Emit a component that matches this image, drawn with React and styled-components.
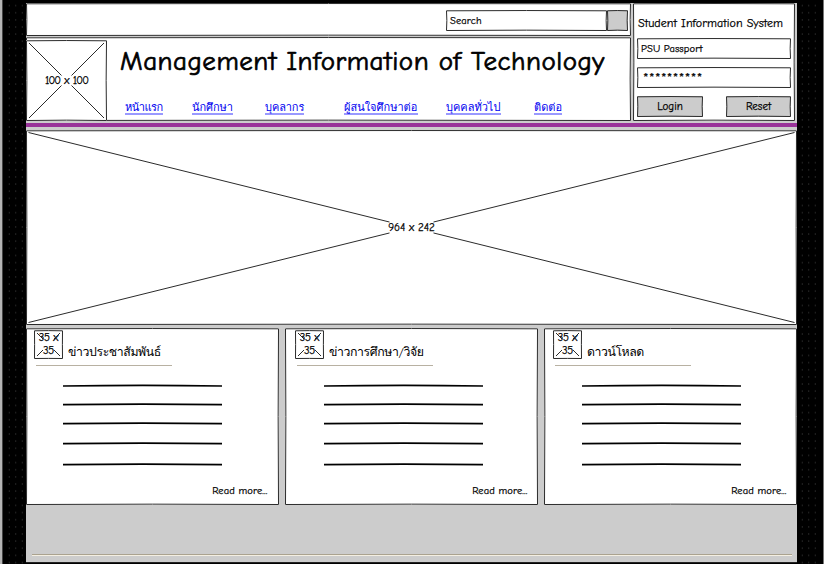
import React from "react";
import styled, { createGlobalStyle } from "styled-components";

const INK = "#2b2b2b";
const GRAY = "#cccccc";

const GlobalStyle = createGlobalStyle`
  *, *::before, *::after { box-sizing: border-box; }
  html, body { margin: 0; background: #000; overflow: hidden; }
  body {
    font-family: "Comic Sans MS", "Comic Neue", Lato, Loma, Garuda, Waree, "Noto Sans Thai Looped", "Noto Sans Thai", sans-serif;
    color: #000;
    -webkit-text-stroke: 0.25px currentColor;
  }
`;

const Page = styled.div`
  display: grid;
  grid-template-columns: 26px 771px 27px;
  width: 824px;
  height: 564px;
  overflow: hidden;
  background: #000;
`;

const Gutter = styled.div`
  display: flex;
  background: #000;
  border-left: ${(p) => (p.$side === "left" ? "2px solid #b4b4b4" : "0")};
  border-right: ${(p) => (p.$side === "right" ? "1px solid #777" : "0")};
  padding-left: ${(p) => (p.$side === "left" ? "4px" : "2px")};
  box-shadow: ${(p) => (p.$side === "left" ? "inset 1px 0 #444" : "none")};
`;

const Dots = styled.div`
  width: 20px;
  background: radial-gradient(circle, #292929 0.5px, transparent 1px) 0 2px / 6.5px 7.15px;
`;

const Main = styled.main`
  display: flex;
  flex-direction: column;
  margin-top: 3px;
  height: 560px;
  background: ${GRAY};
  border-bottom: 1px solid #222;
`;

const Masthead = styled.header`
  display: flex;
  gap: 2px;
  height: 119px;
`;

const MastheadLeft = styled.div`
  display: flex;
  flex-direction: column;
  gap: 1px;
  width: 605px;
`;

const Sketch = styled.div`
  position: relative;
  flex: none;
  width: ${(p) => p.$w}px;
  height: ${(p) => p.$h}px;
  background: ${(p) => p.$fill || "#fff"};
`;

const Outline = styled.svg`
  position: absolute;
  inset: 0;
  pointer-events: none;
`;

function Panel({ w, h, fill, cross, gap = 0, inset = 3, bow = 0.7, children }) {
  const r = w - 0.5;
  const b = h - 0.5;
  const gx = gap;
  const gy = (gap * (h - 2 * inset)) / (w - 2 * inset);
  const cx = w / 2;
  const cy = h / 2;
  return (
    <Sketch $w={w} $h={h} $fill={fill}>
      <Outline width={w} height={h} fill="none" stroke={INK}>
        <path
          d={`M.5 .8Q${cx} ${0.5 - bow * 0.3} ${r} .8Q${r - bow} ${cy} ${r} ${b}Q${cx} ${b - bow} .5 ${b}Q${0.5 + bow} ${cy} .5 .8Z`}
        />
        {cross && (
          <path
            d={`M${inset} ${inset}L${cx - gx} ${cy - gy}M${w - inset} ${inset}L${cx + gx} ${cy - gy}M${inset} ${h - inset}L${cx - gx} ${cy + gy}M${w - inset} ${h - inset}L${cx + gx} ${cy + gy}`}
          />
        )}
      </Outline>
      {children}
    </Sketch>
  );
}

const Centered = styled.div`
  display: flex;
  height: 100%;
  align-items: center;
  justify-content: center;
  white-space: nowrap;
  font-size: 11px;
  letter-spacing: ${(p) => p.$track || 0}px;
  word-spacing: ${(p) => p.$word || 0}px;
`;

const SearchRow = styled.div`
  display: flex;
  justify-content: flex-end;
  padding: 7px 3px 0 0;
`;

const FieldText = styled.div`
  padding-left: 4px;
  line-height: 22px;
  font-size: 10.5px;
  white-space: nowrap;
  letter-spacing: 0.1px;
`;

const Password = styled(FieldText)`
  padding-left: 6px;
  line-height: 23px;
  font-size: 14px;
  letter-spacing: 0.45px;
`;

const Brand = styled.div`
  display: flex;
  padding-top: 3px;
`;

const BrandText = styled.div`
  flex: 1;
  padding-left: 13px;
`;

const Title = styled.h1`
  margin: 2px 0 0;
  font-size: 27px;
  line-height: 40px;
  height: 38px;
  font-weight: 400;
  letter-spacing: 0.52px;
  white-space: nowrap;
  -webkit-text-stroke: 0.7px #000;
`;

const Nav = styled.nav`
  display: grid;
  grid-template-columns: 67px 73px 79px 102px 88px 40px;
  padding: 20px 0 0 5px;
`;

const NavItem = styled.a`
  justify-self: start;
  width: ${(p) => p.$w}px;
  height: 15px;
  line-height: 15px;
  font-size: 11px;
  color: #0000f0;
  white-space: nowrap;
  border-bottom: 2px solid #9999ff;
  letter-spacing: ${(p) => p.$track}px;
  -webkit-text-stroke: 0;
`;

const Login = styled.form`
  display: flex;
  flex-direction: column;
  padding: 13px 0 0 4px;
`;

const LoginTitle = styled.div`
  height: 22px;
  padding-left: 1px;
  line-height: 14px;
  font-size: 12px;
  letter-spacing: 0.06px;
  white-space: nowrap;
`;

const Stack = styled.div`
  display: flex;
  flex-direction: column;
  gap: 8px;
`;

const Buttons = styled.div`
  display: flex;
  justify-content: space-between;
  width: 154px;
`;

const Stripe = styled.div`
  height: 4px;
  margin: 1px 0 3px;
  background: #993399;
`;

const Cards = styled.section`
  display: flex;
  justify-content: space-between;
  margin-top: 3px;
`;

const CardHead = styled.div`
  display: flex;
  gap: 5px;
  padding: 2px 0 0 ${(p) => p.$left}px;
`;

const Thumb = styled.div`
  padding-top: 1px;
  text-align: center;
  font-size: 11px;
  line-height: 13px;
  letter-spacing: -0.2px;
`;

const CardTitle = styled.h2`
  height: 18px;
  margin: 13px 0 0;
  font-size: 12.3px;
  line-height: 18px;
  font-weight: 400;
  white-space: nowrap;
  letter-spacing: ${(p) => p.$track}px;
  -webkit-text-stroke: 0;
`;

const CardRule = styled.div`
  width: 136px;
  height: 1px;
  margin: 4px 0 0 ${(p) => p.$left}px;
  background: #b8b1a2;
`;

const Lines = styled.svg`
  display: block;
  margin: 14px 0 0 ${(p) => p.$left}px;
`;

const ReadMore = styled.a`
  display: block;
  margin-top: 12px;
  padding-right: ${(p) => p.$right}px;
  text-align: right;
  font-size: 10.5px;
  line-height: 18px;
  letter-spacing: 0.1px;
`;

const FooterRule = styled.footer`
  width: 760px;
  height: 2px;
  margin: 49px 0 0 6px;
  border-top: 1px solid #aaa28f;
  background: #f4efe2;
`;

const links = [
  ["หน้าแรก", 38, -0.5],
  ["นักศึกษา", 41, -0.05],
  ["บุคลากร", 39, -0.1],
  ["ผู้สนใจศึกษาต่อ", 74, 0],
  ["บุคคลทั่วไป", 55, 0],
  ["ติดต่อ", 28, 0],
];

const cards = [
  { title: "ข่าวประชาสัมพันธ์", left: 8, right: 11.5, track: -0.4 },
  { title: "ข่าวการศึกษา/วิจัย", left: 10, right: 10.5, track: -0.4 },
  { title: "ดาวน์โหลด", left: 9, right: 10.5, track: -0.45 },
];

function Card({ title, left, right, track }) {
  return (
    <Panel w={253} h={177}>
      <CardHead $left={left}>
        <Panel w={29} h={29} cross gap={5.5} bow={0.2}>
          <Thumb>35 x<br />35</Thumb>
        </Panel>
        <CardTitle $track={track}>{title}</CardTitle>
      </CardHead>
      <CardRule $left={left + 2} />
      <Lines width="159" height="90" $left={left + 29} fill="none" stroke="#000" strokeWidth="1.7">
        {[6, 24.7, 43.7, 63.7, 84.7].map((y) => (
          <path key={y} d={`M0 ${y}Q80 ${y - 1.3} 159 ${y}`} />
        ))}
      </Lines>
      <ReadMore $right={right}>Read more...</ReadMore>
    </Panel>
  );
}

export default function App() {
  return (
    <>
      <GlobalStyle />
      <Page>
        <Gutter $side="left"><Dots /></Gutter>
        <Main>
          <Masthead>
            <MastheadLeft>
              <Panel w={605} h={33}>
                <SearchRow>
                  <Panel w={161} h={21}><FieldText>Search</FieldText></Panel>
                  <Panel w={21} h={21} fill={GRAY} />
                </SearchRow>
              </Panel>
              <Panel w={605} h={84}>
                <Brand>
                  <Panel w={81} h={81} cross gap={5}>
                    <Centered $track={-0.85} $word={1.3}>100 x 100</Centered>
                  </Panel>
                  <BrandText>
                    <Title>Management Information of Technology</Title>
                    <Nav>
                      {links.map(([label, w, track]) => (
                        <NavItem key={label} $w={w} $track={track}>{label}</NavItem>
                      ))}
                    </Nav>
                  </BrandText>
                </Brand>
              </Panel>
            </MastheadLeft>
            <Panel w={162} h={118}>
              <Login>
                <LoginTitle>Student Information System</LoginTitle>
                <Stack>
                  <Panel w={154} h={21}><FieldText>PSU Passport</FieldText></Panel>
                  <Panel w={154} h={21}><Password>**********</Password></Panel>
                  <Buttons>
                    <Panel w={66} h={21} fill={GRAY}><Centered>Login</Centered></Panel>
                    <Panel w={65} h={21} fill={GRAY}><Centered>Reset</Centered></Panel>
                  </Buttons>
                </Stack>
              </Login>
            </Panel>
          </Masthead>
          <Stripe />
          <Panel w={771} h={195} cross gap={22} inset={2.5}>
            <Centered>964 x 242</Centered>
          </Panel>
          <Cards>
            {cards.map((c) => <Card key={c.title} {...c} />)}
          </Cards>
          <FooterRule />
        </Main>
        <Gutter $side="right"><Dots /></Gutter>
      </Page>
    </>
  );
}
